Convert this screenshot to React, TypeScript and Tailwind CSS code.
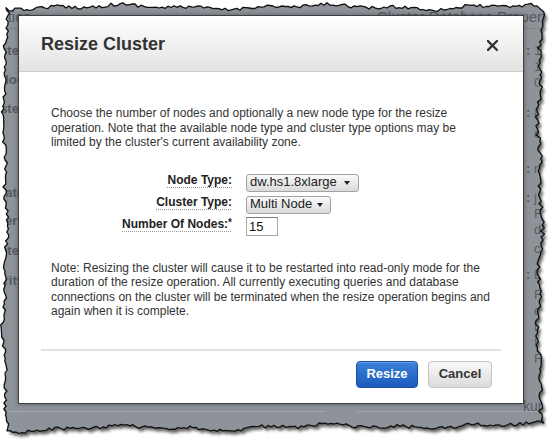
import React, { useMemo } from 'react';

// torn-paper outline of the screenshot, seeded so it is stable between runs
function useTornEdge() {
  return useMemo(() => {
    let seed = 12345;
    const rnd = () => {
      seed = (seed * 16807) % 2147483647;
      return seed / 2147483647;
    };
    const jag = (i: number, amp: number) =>
      (rnd() - 0.5) * amp + Math.sin(i * 0.09) * 1.2 + Math.sin(i * 0.031 + 1) * 1.6;
    const pts: [number, number][] = [];
    for (let x = 6; x <= 538; x += 3) pts.push([x, 7 + jag(x, 3.5)]);
    for (let y = 9; y <= 424; y += 3) pts.push([540 + jag(y, 4.5), y]);
    for (let x = 538; x >= 6; x -= 3) pts.push([x, 425 + (540 - x) * 0.008 + jag(x, 3.5)]);
    for (let y = 424; y >= 9; y -= 3) pts.push([5 + jag(y, 3.5), y]);
    const svg = pts.map(([x, y]) => `${x.toFixed(1)},${y.toFixed(1)}`).join(' ');
    const clip = `polygon(${pts.map(([x, y]) => `${x.toFixed(1)}px ${y.toFixed(1)}px`).join(', ')})`;
    return { svg, clip };
  }, []);
}

const leftRows = [
  { t: 'Cluster', cls: 'mt-[14px]' },
  { t: 'Node loc', cls: 'mt-[13px]' },
  { t: 'Cluster', cls: 'mt-[13px]' },
  { t: 'Create', cls: 'mt-[68px]' },
  { t: 'Master \'', cls: 'mt-[12px]' },
  { t: 'Parameter', cls: 'mt-[14px]' },
  { t: 'Security', cls: 'mt-[14px]' },
];

const rightRows = [
  { t: '1', colon: true, cls: 'mt-[14px]' },
  { t: '1', colon: false, cls: 'mt-0' },
  { t: '0', colon: false, cls: 'mt-0' },
  { t: '8', colon: true, cls: 'mt-[14px]' },
  { t: 'c', colon: false, cls: 'mt-[5px]' },
  { t: 'm', colon: true, cls: 'mt-[19px]' },
  { t: 'j', colon: true, cls: 'mt-[13px]' },
  { t: 'F', colon: false, cls: 'mt-0' },
  { t: 'd', colon: false, cls: 'mt-0' },
  { t: 'c', colon: false, cls: 'mt-[3px]' },
  { t: 'E', colon: true, cls: 'mt-[10px]' },
  { t: 'F', colon: false, cls: 'mt-[4px]' },
  { t: 'c', colon: false, cls: 'mt-0' },
  { t: 'D', colon: false, cls: 'mt-0' },
  { t: 'F', colon: false, cls: 'mt-0' },
  { t: 'F', colon: false, cls: 'mt-0' },
];

function Caret() {
  return (
    <svg width="6" height="4" viewBox="0 0 6 4" className="shrink-0">
      <path d="M0 0 H6 L3 4 Z" fill="#222" />
    </svg>
  );
}

function Label({ children }: { children: React.ReactNode }) {
  return (
    <div className="pt-[1px] text-right font-bold text-[#222]">
      <span className="underline decoration-[#9a9a9a] decoration-dotted underline-offset-[3px]">{children}</span>
    </div>
  );
}

export default function App() {
  const edge = useTornEdge();

  return (
    <div className="relative h-[442px] w-[555px] overflow-hidden bg-white font-['Liberation_Sans',Arial,sans-serif]">
      {/* shadow under the torn screenshot */}
      <svg className="absolute inset-0" width="555" height="442">
        <defs>
          <filter id="blur" x="-10%" y="-10%" width="120%" height="120%">
            <feGaussianBlur stdDeviation="1.8" />
          </filter>
        </defs>
        <polygon points={edge.svg} fill="rgba(0,0,0,0.6)" filter="url(#blur)" transform="translate(2.5 3.5)" />
      </svg>

      <div className="absolute inset-0 bg-[#8e939a]" style={{ clipPath: edge.clip }}>
        {/* page behind the dimmed overlay */}
        <div className="flex h-full flex-col text-[#555a61]">
          <div className="flex h-[29px] shrink-0 border-b border-[#80858c] pt-[6px] text-[15px]">
            <div className="flex w-[31px] justify-end whitespace-nowrap">Cluster Properties</div>
            <div className="ml-[346px] whitespace-nowrap">Cluster Database Properties</div>
          </div>
          <div className="flex h-[382px] shrink-0">
            <div className="flex w-[24px] flex-col">
              {leftRows.map((r, i) => (
                <div key={i} className={`flex h-[16px] items-center justify-end whitespace-nowrap text-[13px] font-bold ${r.cls}`}>
                  {r.t}
                </div>
              ))}
            </div>
            <div className="ml-[502px] flex flex-col">
              {rightRows.map((r, i) => (
                <div key={i} className={`flex h-[16px] items-center whitespace-nowrap text-[13px] ${r.cls}`}>
                  <span className="w-[8px] font-bold">{r.colon ? ':' : ''}</span>
                  <span>{r.t}</span>
                </div>
              ))}
              <div className="ml-[-3px] mt-[31px] flex h-[16px] items-center text-[14px]">kup</div>
            </div>
          </div>
          <div className="flex">
            <div className="h-px w-[325px] bg-[#a3a7ad]" />
            <div className="ml-[33px] h-px flex-1 bg-[#a3a7ad]" />
          </div>
        </div>

        {/* modal dialog */}
        <div className="absolute left-[18px] top-[15px] flex w-[506px] flex-col border border-[#3f3f3f] bg-white shadow-[0_0_5px_rgba(0,0,0,0.35)]">
          <div className="flex h-[56px] shrink-0 items-center justify-between border-b border-[#cdcdcd] bg-gradient-to-b from-[#ffffff] to-[#e3e3e3] pl-[22px] pr-[25px]">
            <h1 className="mt-[1px] text-[18px] font-bold text-[#333]">Resize Cluster</h1>
            <svg width="11" height="11" viewBox="0 0 11 11" className="mt-[3px]">
              <path d="M1 1 L10 10 M10 1 L1 10" stroke="#333" strokeWidth="2.3" strokeLinecap="square" />
            </svg>
          </div>

          <div className="flex flex-col pl-[32px] pr-[30px] pt-[34px] text-[12px] leading-[14.5px] text-[#333]">
            <p>
              Choose the number of nodes and optionally a new node type for the resize operation. Note that the
              available node type and cluster type options may be limited by the cluster's current availability zone.
            </p>

            <div className="mt-[22px] grid grid-cols-[181px_auto] gap-x-[14px]">
              <Label>Node Type:</Label>
              <div className="flex h-[22px] items-center">
                <div className="flex h-[18px] w-[113px] items-center justify-between rounded-[3px] border border-[#a3a3a3] bg-gradient-to-b from-[#fafafa] to-[#dadada] pl-[3px] pr-[8px] text-[13px] text-[#222]">
                  <span>dw.hs1.8xlarge</span>
                  <Caret />
                </div>
              </div>
              <Label>Cluster Type:</Label>
              <div className="flex h-[22px] items-center">
                <div className="flex h-[18px] w-[85px] items-center justify-between rounded-[3px] border border-[#a3a3a3] bg-gradient-to-b from-[#fafafa] to-[#dadada] pl-[3px] pr-[7px] text-[13px] text-[#222]">
                  <span>Multi Node</span>
                  <Caret />
                </div>
              </div>
              <Label>
                Number Of Nodes:<span className="relative top-[-2px] text-[10px]">*</span>
              </Label>
              <div className="flex h-[22px] items-center">
                <input
                  defaultValue="15"
                  className="h-[19px] w-[32px] border border-[#a8a8a8] border-t-[#7a7a7a] bg-white pl-[2px] text-[13px] text-[#111] outline-none"
                />
              </div>
            </div>

            <p className="mt-[23px]">
              Note: Resizing the cluster will cause it to be restarted into read-only mode for the duration of the
              resize operation. All currently executing queries and database connections on the cluster will be
              terminated when the resize operation begins and again when it is complete.
            </p>
          </div>

          <div className="mx-[22px] mt-[30px] h-[2px] bg-[#e2e2e2]" />

          <div className="flex justify-end gap-[10px] pb-[15px] pr-[31px] pt-[10px]">
            <button className="h-[27px] w-[62px] rounded-[4px] border border-[#1b4f9e] bg-gradient-to-b from-[#3c80da] to-[#1b5bbd] text-[13px] font-bold text-white shadow-[inset_0_1px_0_rgba(255,255,255,0.25)]">
              Resize
            </button>
            <button className="h-[27px] w-[64px] rounded-[4px] border border-[#c3c3c3] bg-gradient-to-b from-[#f8f8f8] to-[#dcdcdc] text-[13px] font-bold text-[#333]">
              Cancel
            </button>
          </div>
        </div>
      </div>

      {/* black torn outline */}
      <svg className="pointer-events-none absolute inset-0" width="555" height="442">
        <polygon points={edge.svg} fill="none" stroke="#111" strokeWidth="1.3" strokeLinejoin="round" />
      </svg>
    </div>
  );
}
